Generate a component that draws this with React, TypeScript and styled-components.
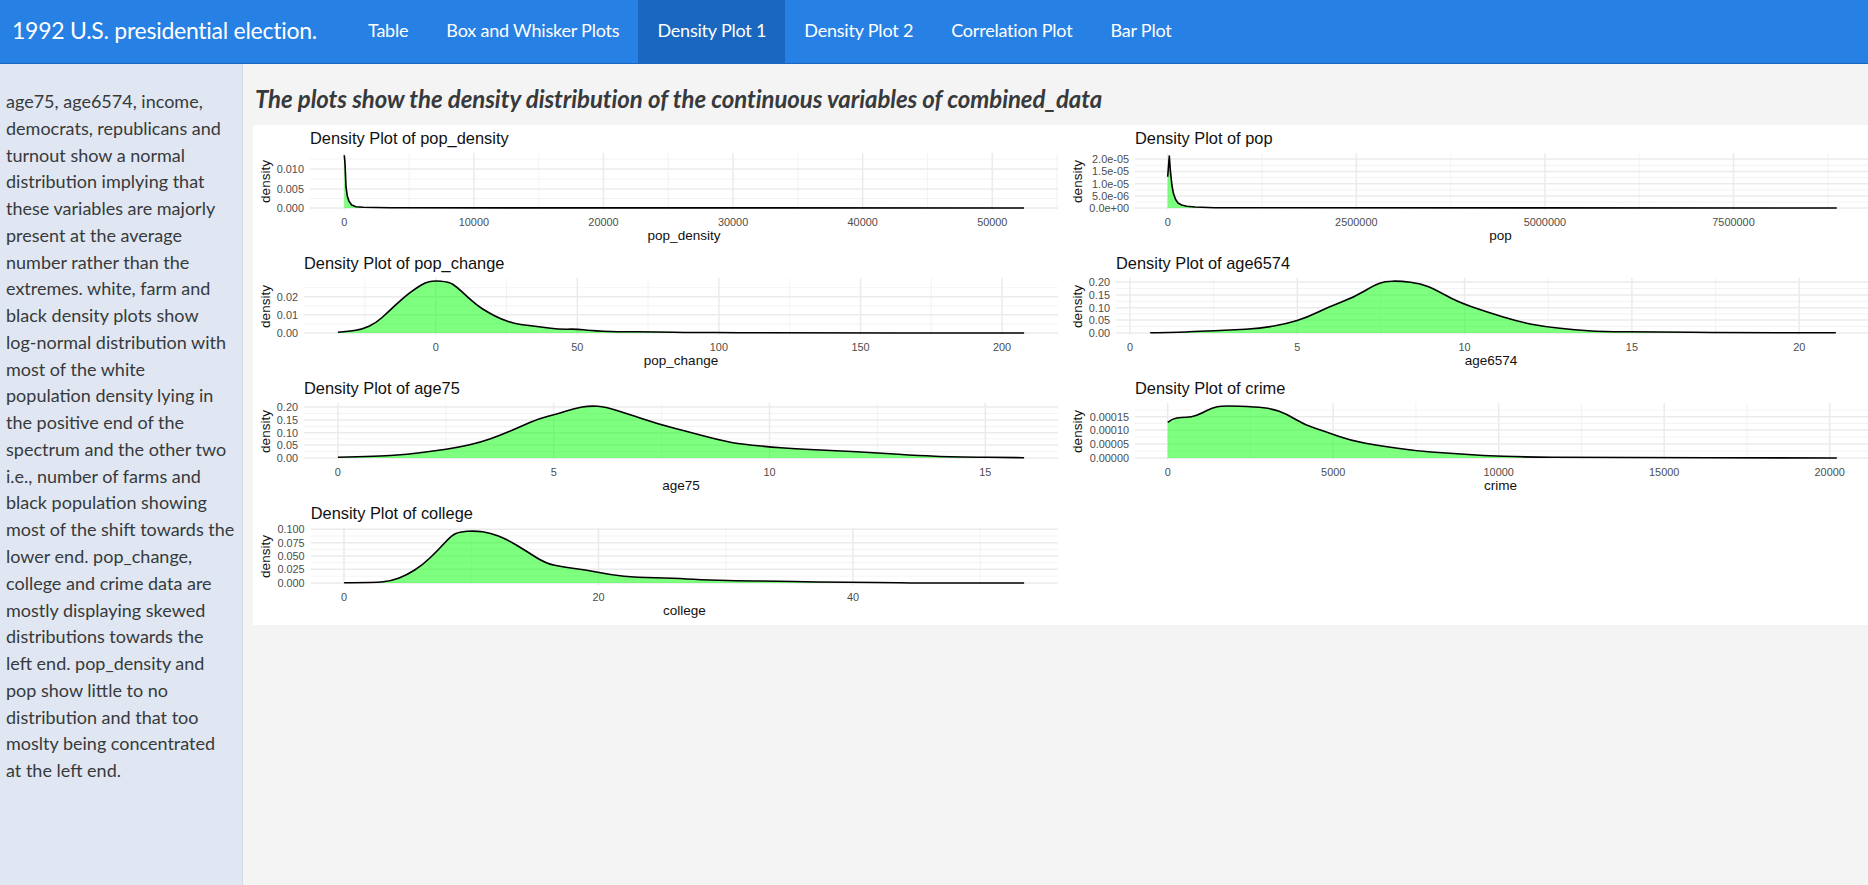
import React from "react";
import styled, { createGlobalStyle } from "styled-components";

const Global = createGlobalStyle`
  html, body { margin: 0; padding: 0; height: 100%; overflow: hidden; background: #f4f4f4; }
  #root { height: 100%; }
  * { box-sizing: border-box; }
`;

const UI_FONT = `Lato, "Noto Sans", sans-serif`;
const PLOT_FONT = `"Liberation Sans", Arial, sans-serif`;

const Page = styled.div`
  display: flex;
  flex-direction: column;
  height: 885px;
  font-family: ${UI_FONT};
  color: #373a3c;
`;
const Navbar = styled.nav`
  display: flex;
  align-items: stretch;
  height: 64px;
  flex: none;
  background: #2780e3;
  border-bottom: 1px solid #1967be;
  padding-left: 12px;
`;
const Brand = styled.div`
  width: 337px;
  flex: none;
  font-size: 23px;
  line-height: 61px;
  letter-spacing: -0.26px;
  color: #fff;
`;
const NavList = styled.div`
  display: flex;
`;
const NavItem = styled.div<{ $active?: boolean }>`
  padding: 0 19px;
  font-size: 18px;
  line-height: 61px;
  letter-spacing: -0.2px;
  color: #fff;
  background: ${(p) => (p.$active ? "#1967be" : "transparent")};
`;
const Main = styled.div`
  display: flex;
  flex: 1;
  min-height: 0;
`;
const Sidebar = styled.aside`
  width: 243px;
  flex: none;
  background: #e0e7f2;
  border-right: 1px solid #d3d9e2;
  padding: 24px 0 0 6px;
  font-size: 18px;
  line-height: 26.76px;
`;
const SideLine = styled.div`
  white-space: nowrap;
`;
const Content = styled.main`
  flex: 1;
  min-width: 0;
  padding: 17px 0 0 10px;
`;
const Heading = styled.h3`
  margin: 0 0 9px 2px;
  font-size: 24px;
  line-height: 35px;
  font-weight: 700;
  font-style: italic;
  letter-spacing: -0.07px;
  color: #373a3c;
`;
const PlotCard = styled.section`
  display: grid;
  grid-template-columns: 807px 808px;
  grid-auto-rows: 125px;
  background: #fff;
`;
const PlotSvg = styled.svg`
  display: block;
  width: 100%;
  height: 125px;
`;
const PlotTitle = styled.text`
  font-family: ${PLOT_FONT};
  font-size: 16.4px;
  fill: #111;
`;
const AxisTitle = styled.text`
  font-family: ${PLOT_FONT};
  font-size: 13.5px;
  fill: #111;
  text-anchor: middle;
`;
const TickLabel = styled.text<{ $anchor: string }>`
  font-family: ${PLOT_FONT};
  font-size: 10.9px;
  fill: #4d4d4d;
  text-anchor: ${(p) => p.$anchor};
`;

type Pt = [number, number];
type PlotDef = {
  name: string;
  col: 0 | 1;
  row: number;
  left: number; // panel left, page px
  xTicks: [string, number][]; // label, page px
  yTicks: [string, number][]; // label, px relative to the row top
  zoom: { ox: number; sx: number; oy: number };
  curve: Pt[];
  sharp?: boolean;
};

const LEFT_X = 253;
const RIGHT_X = 1060;
const PANEL_TOP = 28;
const PANEL_BOTTOM = 85;
const BASE = 83;

const ticks = (labels: string[], start: number, step: number): [string, number][] =>
  labels.map((l, i) => [l, start + i * step]);

const plots: PlotDef[] = [
  {
    name: "pop_density", col: 0, row: 0, left: 310,
    xTicks: ticks(["0", "10000", "20000", "30000", "40000", "50000"], 344.3, 129.6),
    yTicks: [["0.010", 44], ["0.005", 64], ["0.000", 83]],
    zoom: { ox: 250, sx: 3, oy: 120 }, sharp: true,
    curve: [[283, 106], [285, 130], [288, 200], [292, 228], [297, 244], [305, 255], [318, 260], [340, 262], [420, 263.5], [2322, 264]],
  },
  {
    name: "pop", col: 1, row: 0, left: 1135,
    xTicks: ticks(["0", "2500000", "5000000", "7500000"], 1167.7, 188.6),
    yTicks: [["2.0e-05", 34], ["1.5e-05", 46.5], ["1.0e-05", 58.7], ["5.0e-06", 71], ["0.0e+00", 83]],
    zoom: { ox: 1060, sx: 1.94, oy: 120 }, sharp: true,
    curve: [[209, 170], [212, 108], [214, 150], [217, 195], [220, 220], [224, 238], [229, 249], [236, 255], [246, 259], [262, 261], [300, 263], [1507, 264]],
  },
  {
    name: "pop_change", col: 0, row: 1, left: 304,
    xTicks: ticks(["0", "50", "100", "150", "200"], 435.7, 141.6),
    yTicks: [["0.02", 46.7], ["0.01", 64.7], ["0.00", 83]],
    zoom: { ox: 250, sx: 1.912, oy: 245 },
    curve: [[168, 262], [190, 259], [215, 253], [240, 235], [265, 200], [285, 170], [300, 150], [320, 127], [335, 113], [350, 107], [380, 110], [395, 125], [415, 155], [435, 182], [455, 202], [480, 222], [505, 236], [530, 241], [560, 246], [590, 253], [625, 252], [650, 257], [700, 260], [780, 261], [840, 263], [900, 262], [1000, 264], [1480, 264]],
  },
  {
    name: "age6574", col: 1, row: 1, left: 1116,
    xTicks: ticks(["0", "5", "10", "15", "20"], 1130, 167.3),
    yTicks: [["0.20", 32], ["0.15", 45], ["0.10", 57.7], ["0.05", 70], ["0.00", 83]],
    zoom: { ox: 1060, sx: 1.94, oy: 120 },
    curve: [[175, 638], [230, 637], [270, 633], [330, 631], [390, 625], [440, 611], [480, 592], [520, 562], [570, 532], [610, 495], [630, 484], [660, 483], [700, 490], [730, 510], [770, 545], [830, 577], [890, 605], [940, 620], [1000, 630], [1050, 635], [1150, 636], [1300, 638], [1505, 638]],
  },
  {
    name: "age75", col: 0, row: 2, left: 304,
    xTicks: ticks(["0", "5", "10", "15"], 337.9, 215.8),
    yTicks: [["0.20", 32], ["0.15", 45], ["0.10", 57.7], ["0.05", 70], ["0.00", 83]],
    zoom: { ox: 250, sx: 1.912, oy: 245 },
    curve: [[168, 637], [250, 633], [300, 628], [350, 618], [400, 607], [440, 592], [480, 570], [520, 543], [550, 522], [590, 506], [620, 490], [650, 482], [680, 486], [720, 505], [780, 537], [850, 565], [890, 582], [930, 596], [990, 605], [1040, 612], [1120, 617], [1200, 624], [1280, 632], [1340, 635], [1480, 638]],
  },
  {
    name: "crime", col: 1, row: 2, left: 1135,
    xTicks: ticks(["0", "5000", "10000", "15000", "20000"], 1167.7, 165.5),
    yTicks: [["0.00015", 41.7], ["0.00010", 55], ["0.00005", 69], ["0.00000", 83]],
    zoom: { ox: 1060, sx: 1.94, oy: 370 },
    curve: [[209, 157], [218, 146], [235, 142], [255, 142], [275, 130], [295, 113], [315, 107], [380, 111], [410, 116], [440, 132], [475, 165], [515, 185], [565, 212], [620, 227], [690, 243], [750, 249], [820, 257], [900, 261], [1010, 263], [1507, 264]],
  },
  {
    name: "college", col: 0, row: 3, left: 310.7,
    xTicks: ticks(["0", "20", "40"], 344, 254.5),
    yTicks: [["0.100", 29.3], ["0.075", 42.7], ["0.050", 56], ["0.025", 69.3], ["0.000", 83]],
    zoom: { ox: 250, sx: 1.912, oy: 495 },
    curve: [[180, 263], [240, 263], [270, 258], [300, 240], [330, 210], [360, 165], [385, 122], [400, 111], [430, 107], [460, 114], [490, 132], [530, 170], [565, 205], [600, 217], [640, 224], [690, 240], [740, 247], [810, 250], [860, 254], [930, 258], [1000, 258], [1080, 261], [1200, 262], [1280, 264], [1480, 264]],
  },
];

const smoothPath = (p: Pt[], sharp?: boolean) => {
  if (sharp) return p.map((q, i) => `${i ? "L" : "M"}${q[0].toFixed(1)} ${q[1].toFixed(1)}`).join("");
  let d = `M${p[0][0].toFixed(1)} ${p[0][1].toFixed(1)}`;
  for (let i = 1; i < p.length - 1; i++) {
    const mx = (p[i][0] + p[i + 1][0]) / 2;
    const my = (p[i][1] + p[i + 1][1]) / 2;
    d += `Q${p[i][0].toFixed(1)} ${p[i][1].toFixed(1)} ${mx.toFixed(1)} ${my.toFixed(1)}`;
  }
  const l = p[p.length - 1];
  return d + `L${l[0].toFixed(1)} ${l[1].toFixed(1)}`;
};

const DensityPlot = ({ def }: { def: PlotDef }) => {
  const x0 = def.col === 0 ? LEFT_X : RIGHT_X;
  const width = def.col === 0 ? 807 : 808;
  const y0 = 125 + def.row * 125;
  const panelL = def.left - x0;
  const panelR = (def.col === 0 ? 1058 : 1868) - x0;
  const xs = def.xTicks.map((t) => t[1] - x0);
  const ys = def.yTicks.map((t) => t[1]);

  const xStep = xs[1] - xs[0];
  const xMinor: number[] = [];
  for (let v = xs[0] - xStep / 2; v <= panelR + 0.5; v += xStep) if (v >= panelL) xMinor.push(v);
  const yMinor: number[] = [];
  for (let i = 0; i < ys.length - 1; i++) yMinor.push((ys[i] + ys[i + 1]) / 2);
  const yTop = ys[0] - (ys[1] - ys[0]) / 2;
  if (yTop > PANEL_TOP) yMinor.push(yTop);

  const pts: Pt[] = def.curve.map(([zx, zy]) => [
    def.zoom.ox + zx / def.zoom.sx - x0,
    def.zoom.oy + zy / 3 - y0,
  ]);
  const line = smoothPath(pts, def.sharp);
  const first = pts[0];
  const last = pts[pts.length - 1];
  const area = `${line}L${last[0].toFixed(1)} ${BASE}L${first[0].toFixed(1)} ${BASE}Z`;
  const midX = (panelL + (def.col === 0 ? 1058 : 1866) - x0) / 2;

  return (
    <PlotSvg viewBox={`0 0 ${width} 125`}>
      <PlotTitle x={panelL} y={19}>{`Density Plot of ${def.name}`}</PlotTitle>
      {yMinor.map((y) => (
        <line key={`ym${y}`} x1={panelL} x2={panelR} y1={y} y2={y} stroke="#f0f0f0" strokeWidth={0.8} />
      ))}
      {xMinor.map((x) => (
        <line key={`xm${x}`} x1={x} x2={x} y1={PANEL_TOP} y2={PANEL_BOTTOM} stroke="#f0f0f0" strokeWidth={0.8} />
      ))}
      {ys.map((y) => (
        <line key={`yM${y}`} x1={panelL} x2={panelR} y1={y} y2={y} stroke="#ebebeb" strokeWidth={1.5} />
      ))}
      {xs.map((x) => (
        <line key={`xM${x}`} x1={x} x2={x} y1={PANEL_TOP} y2={PANEL_BOTTOM} stroke="#ebebeb" strokeWidth={1.5} />
      ))}
      <path d={area} fill="rgba(0,255,0,0.5)" />
      <path d={line} fill="none" stroke="#000" strokeWidth={1.6} strokeLinejoin="round" />
      {def.yTicks.map(([label, y]) => (
        <TickLabel key={label} $anchor="end" x={panelL - 6} y={y + 3.8}>{label}</TickLabel>
      ))}
      {def.xTicks.map(([label, x]) => (
        <TickLabel key={label} $anchor="middle" x={x - x0} y={100.8}>{label}</TickLabel>
      ))}
      <AxisTitle x={midX} y={115}>{def.name}</AxisTitle>
      <AxisTitle transform={`translate(${def.col === 0 ? 17 : 22} 56.5) rotate(-90)`}>density</AxisTitle>
    </PlotSvg>
  );
};

const sideText = [
  "age75, age6574, income,",
  "democrats, republicans and",
  "turnout show a normal",
  "distribution implying that",
  "these variables are majorly",
  "present at the average",
  "number rather than the",
  "extremes. white, farm and",
  "black density plots show",
  "log-normal distribution with",
  "most of the white",
  "population density lying in",
  "the positive end of the",
  "spectrum and the other two",
  "i.e., number of farms and",
  "black population showing",
  "most of the shift towards the",
  "lower end. pop_change,",
  "college and crime data are",
  "mostly displaying skewed",
  "distributions towards the",
  "left end. pop_density and",
  "pop show little to no",
  "distribution and that too",
  "moslty being concentrated",
  "at the left end.",
];

const navItems = ["Table", "Box and Whisker Plots", "Density Plot 1", "Density Plot 2", "Correlation Plot", "Bar Plot"];

export default function App() {
  return (
    <Page>
      <Global />
      <Navbar>
        <Brand>1992 U.S. presidential election.</Brand>
        <NavList>
          {navItems.map((n) => (
            <NavItem key={n} $active={n === "Density Plot 1"}>{n}</NavItem>
          ))}
        </NavList>
      </Navbar>
      <Main>
        <Sidebar>
          {sideText.map((l) => (
            <SideLine key={l}>{l}</SideLine>
          ))}
        </Sidebar>
        <Content>
          <Heading>The plots show the density distribution of the continuous variables of combined_data</Heading>
          <PlotCard>
            {plots.map((p) => (
              <DensityPlot key={p.name} def={p} />
            ))}
          </PlotCard>
        </Content>
      </Main>
    </Page>
  );
}
